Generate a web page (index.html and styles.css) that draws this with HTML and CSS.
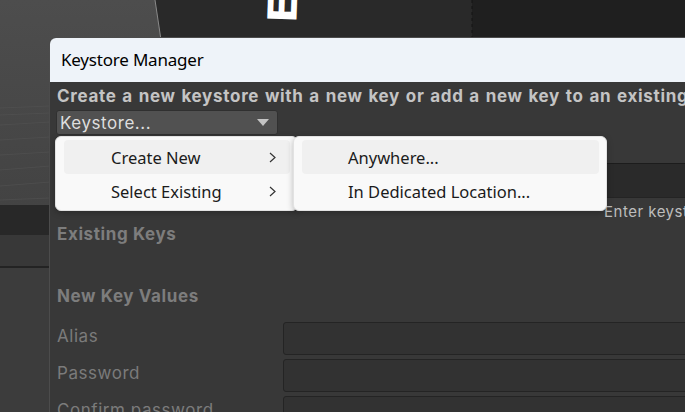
FILE: index.html
```html
<!DOCTYPE html>
<html>
<head>
<meta charset="utf-8">
<link rel="stylesheet" href="styles.css">
</head>
<body>
<div class="scene">
  <svg class="scene-art" width="685" height="412" viewBox="0 0 685 412">
    <defs>
      <linearGradient id="sky" x1="0" y1="0" x2="0" y2="1">
        <stop offset="0" stop-color="#4d4d4d"/>
        <stop offset="1" stop-color="#434343"/>
      </linearGradient>
    </defs>
    <rect x="0" y="0" width="685" height="412" fill="#3c3c3c"/>
    <rect x="0" y="0" width="200" height="205" fill="url(#sky)"/>
    <g stroke="#535353" stroke-width="1" opacity="0.6">
      <line x1="0" y1="108" x2="50" y2="106"/>
      <line x1="0" y1="115" x2="50" y2="113"/>
      <line x1="0" y1="125" x2="50" y2="122"/>
      <line x1="0" y1="140" x2="50" y2="137"/>
      <line x1="0" y1="155" x2="50" y2="152"/>
      <line x1="0" y1="170" x2="50" y2="166"/>
      <line x1="0" y1="186" x2="50" y2="182"/>
      <line x1="0" y1="200" x2="50" y2="198"/>
    </g>
    <polygon points="155,0 685,0 685,40 161,40" fill="#292929"/>
    <rect x="472" y="0" width="213" height="40" fill="#1f1f1f"/>
    <line x1="155" y1="0" x2="161" y2="40" stroke="#8a8a8a" stroke-width="1"/>
    <line x1="472" y1="0" x2="472" y2="40" stroke="#141414" stroke-width="1" stroke-dasharray="3 3"/>
    <rect x="0" y="205" width="60" height="30" fill="#282828"/>
    <rect x="0" y="235" width="60" height="31" fill="#383838"/>
    <rect x="0" y="266" width="60" height="2" fill="#232323"/>
    <rect x="0" y="268" width="60" height="144" fill="#3c3c3c"/>
  </svg>
  <span class="scene-letter">E</span>
</div>

<div class="window">
  <div class="titlebar">Keystore Manager</div>
  <div class="content">
    <p class="intro">Create a new keystore with a new key or add a new key to an existing keystore.</p>
    <div class="popup">
      <span>Keystore...</span>
      <svg class="popup-arrow" width="12" height="7" viewBox="0 0 12 7"><polygon points="0,0 12,0 6,7" fill="#c4c4c4"/></svg>
    </div>
    <div class="path-row"><div class="path-field"></div></div>
    <div class="hint">Enter keystore password</div>
    <h3 class="section first">Existing Keys</h3>
    <h3 class="section second">New Key Values</h3>
    <div class="fields">
      <label class="label">Alias</label><div class="input"></div>
      <label class="label">Password</label><div class="input"></div>
      <label class="label">Confirm password</label><div class="input"></div>
    </div>
  </div>
</div>

<div class="menu menu-main">
  <div class="item active"><span>Create New</span><svg class="chev" width="7" height="11" viewBox="0 0 7 11"><polyline points="1,1 6,5.5 1,10" fill="none" stroke="#333" stroke-width="1.2"/></svg></div>
  <div class="item"><span>Select Existing</span><svg class="chev" width="7" height="11" viewBox="0 0 7 11"><polyline points="1,1 6,5.5 1,10" fill="none" stroke="#333" stroke-width="1.2"/></svg></div>
</div>
<div class="menu menu-sub">
  <div class="item active"><span>Anywhere...</span></div>
  <div class="item"><span>In Dedicated Location...</span></div>
</div>
</body>
</html>
```

FILE: styles.css
```css
html, body {
  margin: 0;
  padding: 0;
  width: 685px;
  height: 412px;
  overflow: hidden;
  background: #3c3c3c;
}

.scene {
  position: absolute;
  left: 0;
  top: 0;
  width: 685px;
  height: 412px;
  overflow: hidden;
}

.scene-art {
  display: block;
}

.scene-letter {
  position: absolute;
  left: 269px;
  top: -11px;
  font-family: "DejaVu Sans", sans-serif;
  font-weight: bold;
  font-size: 40px;
  line-height: 40px;
  color: #ffffff;
  transform: rotate(-88deg);
}

.window {
  position: absolute;
  left: 49px;
  top: 37px;
  width: 660px;
  height: 400px;
  border-top: 1px solid #4c4c4c;
  border-left: 1px solid #4c4c4c;
  border-top-left-radius: 7px;
  overflow: hidden;
  background: #383838;
}

.titlebar {
  height: 44px;
  background: #eef3f9;
  color: #000;
  font-family: "Noto Sans", sans-serif;
  font-size: 17px;
  letter-spacing: -0.2px;
  line-height: 44px;
  padding-left: 11px;
}

.content {
  padding: 4px 0 0 7px;
  font-family: Inter, sans-serif;
}

.intro {
  margin: 0;
  height: 20px;
  line-height: 20px;
  white-space: nowrap;
  font-size: 17px;
  font-weight: 700;
  color: #c4c4c4;
  letter-spacing: 0.7px;
  word-spacing: 1px;
}

.popup {
  margin-top: 4px;
  margin-left: -1px;
  height: 23px;
  background: #515151;
  border: 1px solid #303030;
  border-radius: 3px;
  display: flex;
  align-items: center;
  justify-content: space-between;
  padding: 0 8px 0 3px;
  box-sizing: content-box;
  width: 209px;
  color: #dedede;
  font-size: 17px;
  letter-spacing: 0.55px;
}

.popup-arrow {
  display: block;
}

.path-row {
  margin-top: 28px;
  padding-left: 226px;
}

.path-field {
  height: 33px;
  background: #2a2a2a;
  border-top: 1px solid #1c1c1c;
  border-bottom: 1px solid #242424;
}

.hint {
  margin-top: 5px;
  padding-left: 547px;
  height: 17px;
  line-height: 17px;
  font-size: 15px;
  color: #bdbdbd;
  white-space: nowrap;
  letter-spacing: 0.5px;
}

.section {
  margin: 0;
  height: 20px;
  line-height: 20px;
  font-size: 17px;
  font-weight: 700;
  color: #7d7d7d;
  letter-spacing: 0.6px;
}

.section.first {
  margin-top: 4px;
}

.section.second {
  margin-top: 42px;
}

.fields {
  margin-top: 16px;
  display: grid;
  grid-template-columns: 226px 1fr;
  grid-auto-rows: 33px;
  row-gap: 4px;
}

.label {
  font-size: 17px;
  line-height: 28px;
  color: #7b7b7b;
  letter-spacing: 0.55px;
  white-space: nowrap;
}

.input {
  background: #323232;
  border: 1px solid #242424;
  border-radius: 3px;
}

.menu {
  position: absolute;
  top: 136px;
  height: 75px;
  box-sizing: border-box;
  padding: 3px 7px 0 8px;
  background: #f9f9f9;
  border: 1px solid #e2e2e2;
  border-radius: 6px;
  box-shadow: 0 2px 6px rgba(0, 0, 0, 0.25);
  font-family: "Noto Sans", sans-serif;
  font-size: 16.5px;
  color: #1b1b1b;
}

.menu-main {
  left: 55px;
  width: 243px;
}

.menu-sub {
  left: 293px;
  width: 314px;
}

.item {
  height: 34px;
  display: flex;
  align-items: center;
  justify-content: space-between;
  padding: 0 14px 0 47px;
  border-radius: 4px;
}

.menu-sub .item {
  padding-left: 46px;
}

.item.active {
  background: #f0f0f0;
}

.chev {
  display: block;
}
```
